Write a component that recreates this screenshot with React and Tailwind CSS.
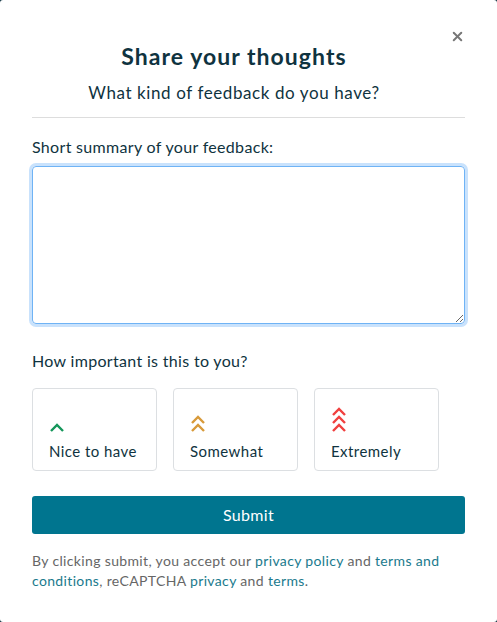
import React from 'react';
import { X } from 'lucide-react';

const font = { fontFamily: '"Lato", "Open Sans", sans-serif' };

function Chevrons({ count, color }) {
  const h = 7 + (count - 1) * 8;
  return (
    <svg width="16" height={h + 2} viewBox={`0 0 16 ${h + 2}`} fill="none">
      {Array.from({ length: count }).map((_, i) => (
        <path
          key={i}
          d={`M2 ${8 + i * 8} L8 ${2 + i * 8} L14 ${8 + i * 8}`}
          stroke={color}
          strokeWidth="2.4"
        />
      ))}
    </svg>
  );
}

const options = [
  { label: 'Nice to have', count: 1, color: '#14965a' },
  { label: 'Somewhat', count: 2, color: '#d89a3a' },
  { label: 'Extremely', count: 3, color: '#f0403f' },
];

export default function App() {
  return (
    <div className="min-h-[622px] bg-[#0f3340]" style={font}>
      <div className="bg-white rounded-[3px] h-[622px] px-8 pt-[41px] relative">
        <button className="absolute right-[32px] top-[29px] text-[#777]">
          <X className="w-[15px] h-[15px]" strokeWidth={3.2} />
        </button>
        <div className="pr-[29px]">
          <h1 className="text-center text-[23px] font-bold tracking-[0.045em] text-[#0f3340] leading-[30px]">
            Share your thoughts
          </h1>
          <p className="text-center text-[17px] tracking-[0.035em] text-[#0f3340] mt-[10px] leading-[24px]">
            What kind of feedback do you have?
          </p>
        </div>
        <div className="border-t border-[#ddd] mt-[12px]" />

        <label className="block text-[16px] tracking-[0.02em] text-[#0f3340] mt-[19px] leading-[20px]">
          Short summary of your feedback:
        </label>
        <textarea className="block w-full h-[158px] mt-[9px] rounded-[4px] border border-[#6fb3f5] ring-[3px] ring-[#c9e2fc] outline-none resize-y" />

        <p className="text-[16px] tracking-[0.02em] text-[#0f3340] mt-[27px] leading-[20px]">
          How important is this to you?
        </p>
        <div className="flex gap-4 mt-[17px]">
          {options.map((o) => (
            <div
              key={o.label}
              className="w-[125px] h-[83px] border border-[#dcdfe2] rounded-[4px] px-4 pb-[9px] flex flex-col justify-end"
            >
              <Chevrons count={o.count} color={o.color} />
              <span className="text-[15px] tracking-[0.03em] text-[#0f3340] mt-[9px] leading-[20px]">
                {o.label}
              </span>
            </div>
          ))}
        </div>

        <button className="w-full h-[38px] mt-[25px] rounded-[3px] bg-[#00758f] text-white text-[16px] tracking-[0.02em]">
          Submit
        </button>

        <p className="mt-[17px] text-[14px] leading-[20px] tracking-[0.025em] text-[#666]">
          By clicking submit, you accept our{' '}
          <a className="text-[#1a7a8d]">privacy policy</a> and{' '}
          <a className="text-[#1a7a8d]">terms and conditions</a>, reCAPTCHA{' '}
          <a className="text-[#1a7a8d]">privacy</a> and{' '}
          <a className="text-[#1a7a8d]">terms</a>.
        </p>
      </div>
    </div>
  );
}
